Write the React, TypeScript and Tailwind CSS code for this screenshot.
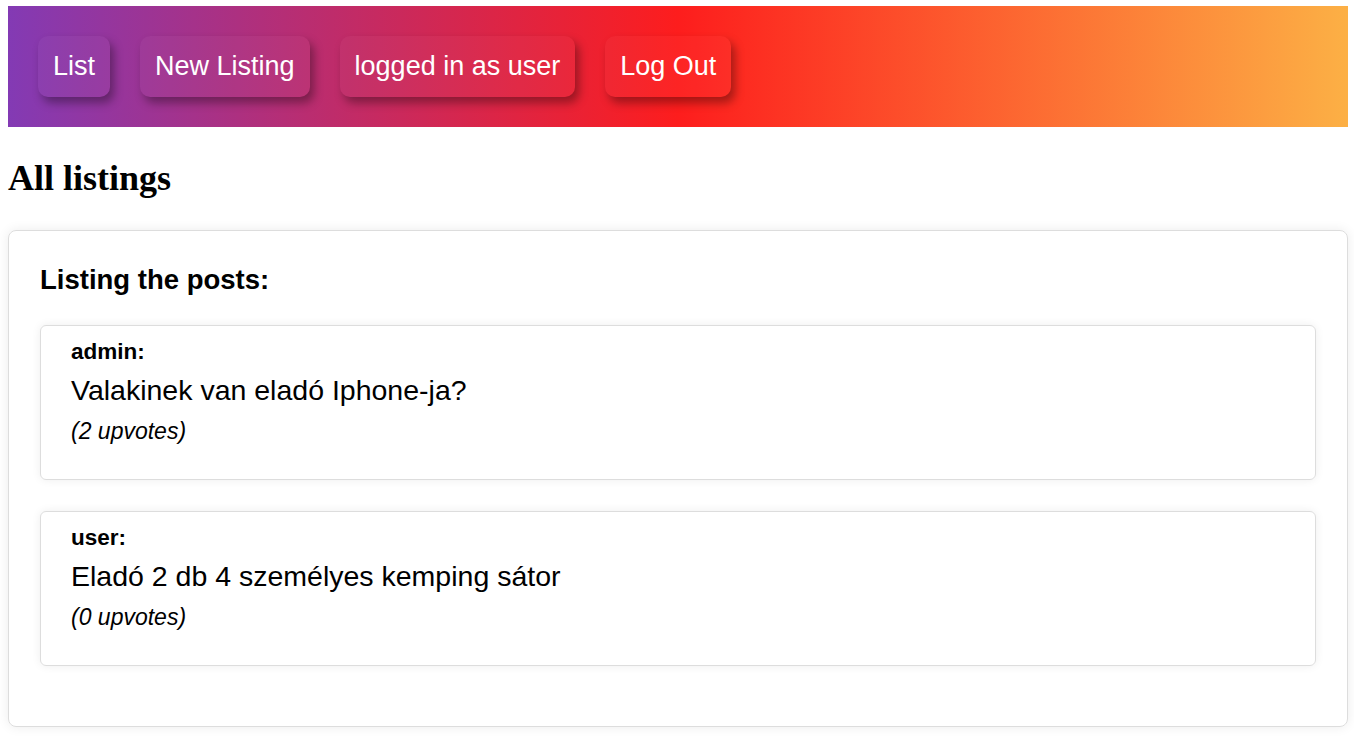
const navItems = ['List', 'New Listing', 'logged in as user', 'Log Out'];

const posts = [
  { author: 'admin', title: 'Valakinek van eladó Iphone-ja?', upvotes: 2 },
  { author: 'user', title: 'Eladó 2 db 4 személyes kemping sátor', upvotes: 0 },
];

export default function App() {
  return (
    <div className="pl-2 pr-[6px] pt-[6px] pb-4 bg-white text-black font-['Liberation_Sans',Arial,sans-serif]">
      {/* Top navigation */}
      <nav className="flex items-center gap-[30px] px-[30px] py-[30px] bg-[linear-gradient(90deg,#833ab4_0%,#fd1d1d_50%,#fcb045_100%)]">
        {navItems.map((item) => (
          <a
            key={item}
            href="#"
            className="px-[15px] py-[15px] text-[27px] leading-[31px] text-white rounded-[10px] bg-white/[0.03] shadow-[4px_6px_10px_rgba(0,0,0,0.35)]"
          >
            {item}
          </a>
        ))}
      </nav>

      <h2 className="mt-[31px] mb-[32px] text-[36px] leading-[40px] font-bold font-['Liberation_Serif','Times_New_Roman',serif]">
        All listings
      </h2>

      {/* Posts card */}
      <div className="border border-[#dddddd] rounded-[8px] shadow-[0_0_12px_rgba(0,0,0,0.08)] px-[31px] pt-[33px] pb-[60px]">
        <h3 className="text-[27.5px] leading-[31px] font-bold mb-[30px]">Listing the posts:</h3>
        <div className="flex flex-col gap-[31px]">
          {posts.map((post) => (
            <div
              key={post.author}
              className="border border-[#dddddd] rounded-[6px] shadow-[0_0_10px_rgba(0,0,0,0.07)] px-[30px] pt-[13px] pb-[34px]"
            >
              <p className="text-[22.5px] leading-[26px] font-bold">{post.author}:</p>
              <p className="mt-[9px] text-[28.5px] leading-[33px]">{post.title}</p>
              <p className="mt-[11px] text-[23px] leading-[27px] italic">({post.upvotes} upvotes)</p>
            </div>
          ))}
        </div>
      </div>
    </div>
  );
}
